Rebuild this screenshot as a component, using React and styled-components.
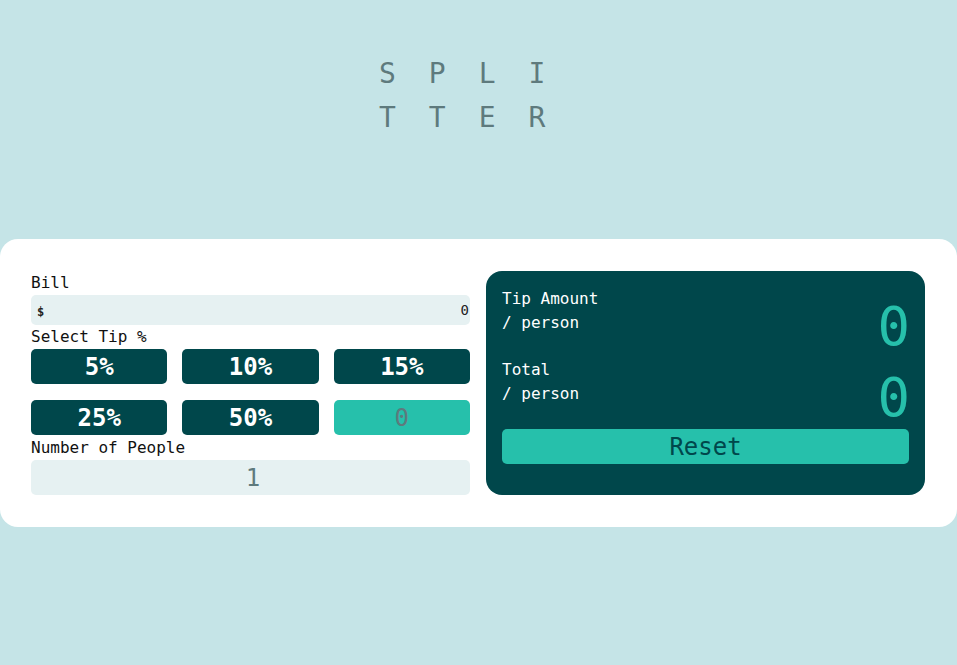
import styled, { createGlobalStyle } from 'styled-components';

const GlobalStyle = createGlobalStyle`
  body {
    margin: 0;
    background: #c5e4e7;
    font-family: "DejaVu Sans Mono", "Liberation Mono", monospace;
  }
`;

const Page = styled.div`
  min-height: 665px;
  display: flex;
  flex-direction: column;
  align-items: center;
`;

const Title = styled.h1`
  width: 210px;
  margin: 52px 0 0 11px;
  font-size: 28px;
  line-height: 44px;
  font-weight: 400;
  letter-spacing: 33px;
  color: #5e7a7d;
  word-break: break-all;
`;

const Card = styled.main`
  margin-top: 99px;
  width: 100%;
  box-sizing: border-box;
  background: #fff;
  border-radius: 18px;
  padding: 32px 31px;
  display: grid;
  grid-template-columns: 439px 439px;
  align-items: start;
  gap: 16px;
`;

const Inputs = styled.section`
  display: flex;
  flex-direction: column;
  padding-top: 2px;
`;

const Label = styled.label`
  font-size: 16px;
  line-height: 20px;
  color: #111;
  margin-bottom: 2px;
`;

const Field = styled.div`
  height: ${p => p.$h}px;
  background: #e6f1f2;
  border-radius: 5px;
  display: flex;
  align-items: center;
  justify-content: ${p => (p.$center ? 'center' : 'space-between')};
  padding: 0 1px 0 6px;
  margin-bottom: ${p => p.$mb || 0}px;
`;

const Dollar = styled.span`
  font-size: 12px;
  font-weight: 700;
  color: #222;
  margin-top: 4px;
`;

const BillValue = styled.span`
  font-size: 14px;
  color: #222;
`;

const PeopleValue = styled.span`
  font-size: 24px;
  color: #5e7a7d;
`;

const TipGrid = styled.div`
  display: grid;
  grid-template-columns: repeat(3, 1fr);
  column-gap: 15px;
  row-gap: 16px;
  margin-bottom: 3px;
`;

const TipButton = styled.button`
  height: 35px;
  border: none;
  border-radius: 5px;
  background: ${p => (p.$custom ? '#26c0ab' : '#00474b')};
  color: ${p => (p.$custom ? '#5e7a7d' : '#fff')};
  font-family: inherit;
  font-size: 24px;
  font-weight: ${p => (p.$custom ? 400 : 700)};
  padding: 0;
`;

const Result = styled.section`
  background: #00474b;
  border-radius: 16px;
  padding: 16px 16px 31px;
  display: flex;
  flex-direction: column;
  gap: 23px;
`;

const Row = styled.div`
  display: flex;
  justify-content: space-between;
  align-items: flex-end;
  height: 48px;
`;

const RowText = styled.div`
  color: #fff;
  font-size: 16px;
  line-height: 24px;
`;

const Amount = styled.div`
  color: #26c0ab;
  font-size: 54px;
  line-height: 54px;
  margin-bottom: -19px;
  margin-right: -1px;
`;

const Reset = styled.button`
  height: 35px;
  border: none;
  border-radius: 5px;
  background: #26c0ab;
  color: #00474b;
  font-family: inherit;
  font-size: 24px;
  padding: 0;
`;

const tips = ['5%', '10%', '15%', '25%', '50%'];

export default function App() {
  return (
    <Page>
      <GlobalStyle />
      <Title>SPLITTER</Title>
      <Card>
        <Inputs>
          <Label>Bill</Label>
          <Field $h={30} $mb={2}>
            <Dollar>$</Dollar>
            <BillValue>0</BillValue>
          </Field>
          <Label>Select Tip %</Label>
          <TipGrid>
            {tips.map(t => (
              <TipButton key={t}>{t}</TipButton>
            ))}
            <TipButton $custom>0</TipButton>
          </TipGrid>
          <Label>Number of People</Label>
          <Field $h={35} $center>
            <PeopleValue>1</PeopleValue>
          </Field>
        </Inputs>
        <Result>
          <Row>
            <RowText>
              Tip Amount<br />/ person
            </RowText>
            <Amount>0</Amount>
          </Row>
          <Row>
            <RowText>
              Total<br />/ person
            </RowText>
            <Amount>0</Amount>
          </Row>
          <Reset>Reset</Reset>
        </Result>
      </Card>
    </Page>
  );
}
